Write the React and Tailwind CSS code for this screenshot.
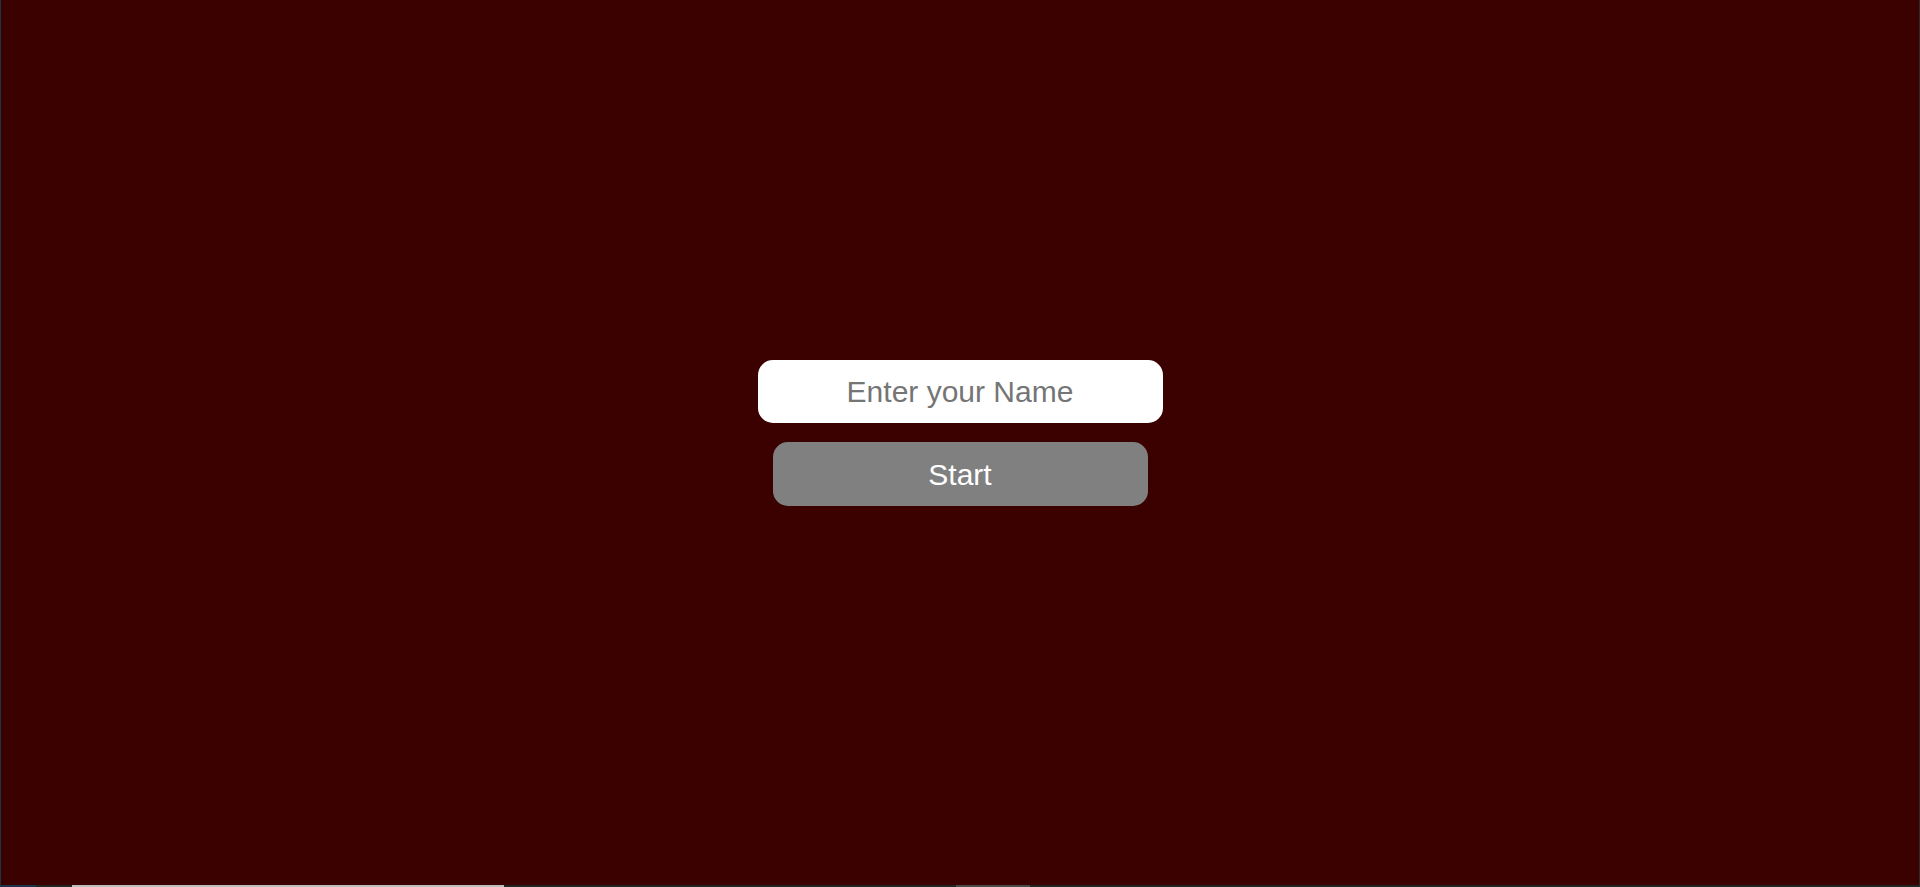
import { useState } from 'react'

export default function App() {
    const [name, setName] = useState('')

    return (
        <div className="h-[887px] w-full flex flex-col bg-[#3b0000] border-l border-l-[#1d3346] border-r border-r-[#2a2a2a] font-['Liberation_Sans',Arial,sans-serif] overflow-hidden">
            <main className="flex-1 flex flex-col items-center justify-center gap-[19px] pb-[19px]">
                <input
                    type="text"
                    value={name}
                    onChange={(e) => setName(e.target.value)}
                    placeholder="Enter your Name"
                    className="w-[405px] h-[63px] rounded-[15px] bg-white text-center text-[30px] text-black placeholder:text-[#757575] outline-none border-0"
                />
                <button className="w-[375px] h-[64px] rounded-[15px] bg-[#808080] text-white text-[30px]">
                    Start
                </button>
            </main>
            {/* barra inferior */}
            <div className="h-[2px] flex bg-[#242424]">
                <div className="w-[35px] bg-[#1d3346]"></div>
                <div className="w-[36px]"></div>
                <div className="w-[432px] bg-[#bdbdbd]"></div>
                <div className="w-[452px]"></div>
                <div className="w-[74px] bg-[#4a4a4a]"></div>
            </div>
        </div>
    )
}
